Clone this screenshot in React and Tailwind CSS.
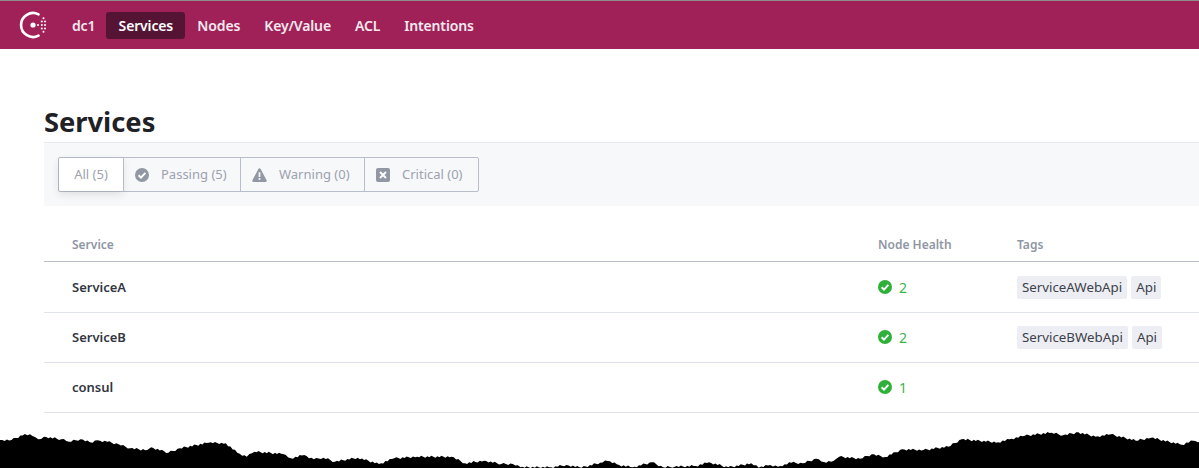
const font = { fontFamily: '"Noto Sans", sans-serif' };

const edgeLeft = [[0,90],[30,90],[65,72],[85,78],[100,88],[115,80],[160,88],[180,95],[210,88],[235,97],[255,91],[280,95],[310,103],[340,115],[385,120],[395,112],[440,128],[470,115],[545,98],[590,100],[620,128],[645,140],[665,125],[740,132],[760,145],[795,135],[820,148],[845,143],[875,155],[935,143],[990,162],[1030,145],[1090,140],[1180,140],[1215,160],[1265,152],[1310,162],[1340,162],[1360,172],[1440,172],[1480,165],[1520,173],[1568,158]];
const edgeRight = [[20,153],[50,165],[85,172],[135,157],[165,172],[195,170],[250,168],[285,157],[335,172],[395,160],[415,173],[445,165],[465,170],[500,158],[530,160],[565,146],[585,156],[610,153],[625,140],[680,146],[710,133],[745,141],[790,118],[845,120],[910,110],[945,88],[1040,97],[1070,88],[1110,77],[1180,68],[1210,76],[1250,67],[1295,80],[1335,73],[1400,92],[1440,83],[1520,104],[1550,92],[1568,95]];

// merge the two traced halves and roughen them a little
const tornEdge = () => {
  const raw = [
    ...edgeLeft.map(([x, y]) => [x / 2.613, y / 3]),
    ...edgeRight.map(([x, y]) => [600 + x / 2.613, y / 3]),
  ];
  const pts = [];
  raw.forEach(([x, y], i) => {
    const next = raw[i + 1];
    pts.push([x, y]);
    if (!next) return;
    const steps = Math.floor((next[0] - x) / 2);
    for (let s = 1; s < steps; s++) {
      const t = s / steps;
      const wobble = ((s * 7 + i * 3) % 5 - 2) * 0.5;
      pts.push([x + (next[0] - x) * t, Math.min(58, y + (next[1] - y) * t + wobble)]);
    }
  });
  return 'M0 58 L' + pts.map(([x, y]) => `${x.toFixed(1)} ${y.toFixed(1)}`).join(' L') + ' L1199 58 Z';
};

const ConsulLogo = () => (
  <svg width="30" height="30" viewBox="0 0 30 30" className="shrink-0" fill="#fff">
    <path d="M19.5 4.3A12 12 0 1 0 19.5 25.7" fill="none" stroke="#fff" strokeWidth="2.6" strokeLinecap="round" />
    <circle cx="14" cy="15" r="2.600" />
    <circle cx="19" cy="15" r="1" />
    <circle cx="22.800" cy="11.500" r="1" />
    <circle cx="26" cy="11.500" r="1" />
    <circle cx="22.800" cy="15" r="1" />
    <circle cx="26" cy="15" r="1" />
    <circle cx="22.800" cy="18.500" r="1" />
    <circle cx="26" cy="18.500" r="1" />
    <circle cx="24.500" cy="8.300" r="1" />
    <circle cx="24.500" cy="21.700" r="1" />
  </svg>
);

const CheckCircle = ({ color, size = 14 }) => (
  <svg width={size} height={size} viewBox="0 0 14 14" className="shrink-0">
    <circle cx="7" cy="7" r="7" fill={color} />
    <path d="M3.600 7.200 6 9.600 10.400 4.900" fill="none" stroke="#fff" strokeWidth="2" />
  </svg>
);

const WarnIcon = () => (
  <svg width="15" height="14" viewBox="0 0 15 14" className="shrink-0">
    <path d="M7.500 0.300c.5 0 .9.3 1.100.7l6 11.200c.4.800-.1 1.800-1.100 1.800H1.500c-1 0-1.500-1-1.100-1.800l6-11.200c.2-.4.600-.7 1.100-.7z" fill="#9197a3" />
    <rect x="6.600" y="4.300" width="1.800" height="4.700" fill="#f7f8fa" />
    <rect x="6.600" y="10" width="1.800" height="1.800" fill="#f7f8fa" />
  </svg>
);

const CrossIcon = () => (
  <svg width="14" height="14" viewBox="0 0 14 14" className="shrink-0">
    <rect width="14" height="14" rx="2" fill="#9197a3" />
    <path d="M4 4 10 10M10 4 4 10" stroke="#fff" strokeWidth="1.900" />
  </svg>
);

const navItems = ['Services', 'Nodes', 'Key/Value', 'ACL', 'Intentions'];

const services = [
  { name: 'ServiceA', health: 2, tags: ['ServiceAWebApi', 'Api'] },
  { name: 'ServiceB', health: 2, tags: ['ServiceBWebApi', 'Api'] },
  { name: 'consul', health: 1, tags: [] },
];

const App = () => {
  return (
    <div className="relative h-[468px] w-[1199px] overflow-hidden bg-white" style={font}>
      <nav className="flex h-[49px] items-center border-t border-[#8c8c8c] bg-[#a02158] pl-[19px] text-[14px] font-semibold tracking-[-0.15px] text-[#f5e9ef]">
        <ConsulLogo />
        <span className="ml-[23px] mr-[11px]">dc1</span>
        <div className="flex items-center">
          {navItems.map((item) => (
            <a
              key={item}
              href="#"
              className={
                item === 'Services'
                  ? 'flex h-[27px] w-[79px] items-center justify-center rounded-[3px] bg-[#561435] text-white'
                  : 'flex h-[27px] items-center px-[12px]'
              }
            >
              {item}
            </a>
          ))}
        </div>
      </nav>

      <main className="pl-[44px]">
        <h1 className="mt-[52px] text-[27.3px] leading-[42px] font-bold text-[#1f2126]">Services</h1>

        <div className="mt-[-1px] flex h-[64px] items-center border-t border-[#e6e9ee] bg-[#f7f8fa] pl-[14px]">
          <div className="flex h-[35px] rounded-[2px] border border-[#b8bdca] text-[13px] text-[#9ca2ae]">
            <div className="flex w-[64px] items-center justify-center rounded-l-[2px] bg-white shadow-[0_3px_8px_rgba(31,33,38,0.12)]">
              All (5)
            </div>
            <div className="flex w-[117px] items-center border-l border-[#b8bdca] pl-[11px]">
              <CheckCircle color="#9197a3" />
              <span className="ml-[12px]">Passing (5)</span>
            </div>
            <div className="flex w-[124px] items-center border-l border-[#b8bdca] pl-[11px]">
              <WarnIcon />
              <span className="ml-[12px]">Warning (0)</span>
            </div>
            <div className="flex w-[114px] items-center border-l border-[#b8bdca] pl-[11px]">
              <CrossIcon />
              <span className="ml-[12px]">Critical (0)</span>
            </div>
          </div>
        </div>

        <div className="grid h-[56px] grid-cols-[834px_139px_1fr] items-end border-b border-[#b8bdca] pb-[7px] text-[12px] leading-[18px] font-semibold text-[#8f96a3]">
          <div className="pl-[28px]">Service</div>
          <div>Node Health</div>
          <div>Tags</div>
        </div>

        {services.map((s, i) => (
          <div
            key={s.name}
            className={
              i === 0
                ? 'grid h-[51px] grid-cols-[834px_139px_1fr] items-center border-b border-[#e1e3ec] text-[13px]'
                : 'grid h-[50px] grid-cols-[834px_139px_1fr] items-center border-b border-[#e1e3ec] pb-[1px] text-[13px]'
            }
          >
            <div className="pl-[28px] pt-[1px] font-semibold text-[#33373f]">{s.name}</div>
            <div className="flex items-center text-[14px] text-[#3cb54a]">
              <CheckCircle color="#2eb039" />
              <span className="ml-[7px]">{s.health}</span>
            </div>
            <div className="flex gap-[4px] text-[13.3px] text-[#3d414a]">
              {s.tags.map((t) => (
                <span key={t} className="flex h-[23px] items-center rounded-[2px] bg-[#eceef3] px-[5px] pt-[1px]">
                  {t}
                </span>
              ))}
            </div>
          </div>
        ))}
      </main>

      <svg width="1199" height="58" viewBox="0 0 1199 58" className="absolute bottom-0 left-0">
        <path d={tornEdge()} fill="#000" />
      </svg>
    </div>
  );
};

export default App;
